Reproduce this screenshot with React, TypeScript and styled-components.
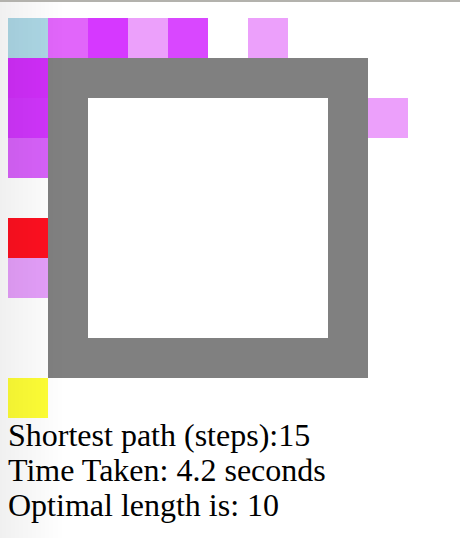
import React from 'react'
import styled, { createGlobalStyle } from 'styled-components'

const GlobalStyle = createGlobalStyle`
  html, body {
    margin: 0;
    padding: 0;
    background: #ffffff;
  }
  body {
    font-family: "Liberation Serif", "Times New Roman", serif;
    color: #000000;
  }
`

const TopRule = styled.div`
  height: 2px;
  background: #b3b2ad;
`

const Page = styled.div`
  padding: 16px 8px 0 8px;
`

const Shade = styled.div`
  position: fixed;
  top: 2px;
  left: 0;
  bottom: 0;
  width: 64px;
  pointer-events: none;
  background: linear-gradient(to right, rgba(0, 0, 0, 0.06), rgba(0, 0, 0, 0));
`

const Board = styled.div`
  display: grid;
  grid-template-columns: repeat(10, 40px);
  grid-auto-rows: 40px;
  width: 400px;
`

const Cell = styled.div<{ $fill: string }>`
  background: ${(props) => props.$fill};
`

const Stats = styled.div`
  font-size: 32px;
  line-height: 35px;
`

const colors: Record<string, string> = {
  '.': 'transparent',
  W: '#808080',
  S: '#add8e6',
  E: '#ff1020',
  G: '#ffff36',
  a: '#e166fa',
  b: '#d638ff',
  c: '#eca0fb',
  d: '#d947ff',
  e: '#d02ef9',
  f: '#d035fb',
  g: '#d862fa',
  h: '#e59ffa',
}

// one char per cell, 10x10 maze
const maze = [
  'Sabcd.c...',
  'eWWWWWWWW.',
  'fW......Wc',
  'gW......W.',
  '.W......W.',
  'EW......W.',
  'hW......W.',
  '.W......W.',
  '.WWWWWWWW.',
  'G.........',
]

export default function App() {
  return (
    <>
      <GlobalStyle />
      <TopRule />
      <Page>
        <Board>
          {maze.map((row, r) =>
            row.split('').map((ch, c) => <Cell key={`${r}-${c}`} $fill={colors[ch]} />)
          )}
        </Board>
        <Stats>
          <div>Shortest path (steps):15</div>
          <div>Time Taken: 4.2 seconds</div>
          <div>Optimal length is: 10</div>
        </Stats>
      </Page>
      <Shade />
    </>
  )
}
